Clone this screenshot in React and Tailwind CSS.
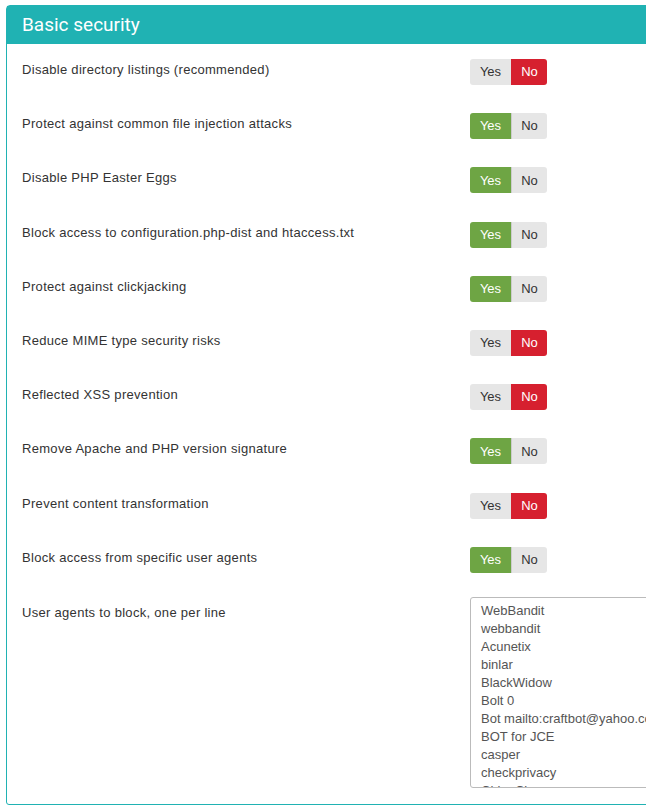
import React from 'react';

const rows = [
    { label: 'Disable directory listings (recommended)', value: false },
    { label: 'Protect against common file injection attacks', value: true },
    { label: 'Disable PHP Easter Eggs', value: true },
    { label: 'Block access to configuration.php-dist and htaccess.txt', value: true },
    { label: 'Protect against clickjacking', value: true },
    { label: 'Reduce MIME type security risks', value: false },
    { label: 'Reflected XSS prevention', value: false },
    { label: 'Remove Apache and PHP version signature', value: true },
    { label: 'Prevent content transformation', value: false },
    { label: 'Block access from specific user agents', value: true },
];

const agents = [
    'WebBandit',
    'webbandit',
    'Acunetix',
    'binlar',
    'BlackWidow',
    'Bolt 0',
    'Bot mailto:craftbot@yahoo.com',
    'BOT for JCE',
    'casper',
    'checkprivacy',
    'ChinaClaw',
    'clshttp',
];

const YesNo = ({ value }) => (
    <div className="flex h-[26px] text-[13px] rounded-[3px] overflow-hidden">
        <span className={`w-[41px] flex items-center justify-center ${value ? 'bg-[#6ea544] text-white' : 'bg-[#e6e6e6] text-[#333]'}`}>Yes</span>
        <span className={`w-[36px] flex items-center justify-center border-l border-[#ccc] ${!value ? 'bg-[#d6202f] text-white border-[#d6202f]' : 'bg-[#e6e6e6] text-[#333]'}`}>No</span>
    </div>
);

export default function App() {
    return (
        <div className="w-[646px] h-[808px] overflow-hidden bg-white pt-[5px] pl-[6px]" style={{ fontFamily: '"Liberation Sans", Arial, sans-serif' }}>
            <div className="w-[700px] border border-[#20b2b3] rounded-t-[4px] rounded-bl-[3px]">
                <div className="h-[38px] bg-[#20b2b3] flex items-center px-[15px]">
                    <h2 className="text-white text-[19px]" style={{ fontFamily: 'Roboto, sans-serif' }}>Basic security</h2>
                </div>
                <div className="px-[15px] pt-[15px] pb-[16px]">
                    {rows.map((r, i) => (
                        <div key={i} className="flex h-[54.2px]">
                            <div className="w-[448px] text-[13px] text-[#333] tracking-[0.3px] pt-[1px]">{r.label}</div>
                            <div>
                                <YesNo value={r.value} />
                            </div>
                        </div>
                    ))}
                    <div className="flex -mt-[4px]">
                        <div className="w-[448px] text-[13px] text-[#333] tracking-[0.3px] pt-[6px]">User agents to block, one per line</div>
                        <div className="w-[220px] h-[191px] border border-[#bbb] rounded-[3px] overflow-hidden px-[10px] pt-[4px] text-[13px] leading-[18px] text-[#555] whitespace-nowrap">
                            {agents.map(a => <div key={a}>{a}</div>)}
                        </div>
                    </div>
                </div>
            </div>
        </div>
    );
}
